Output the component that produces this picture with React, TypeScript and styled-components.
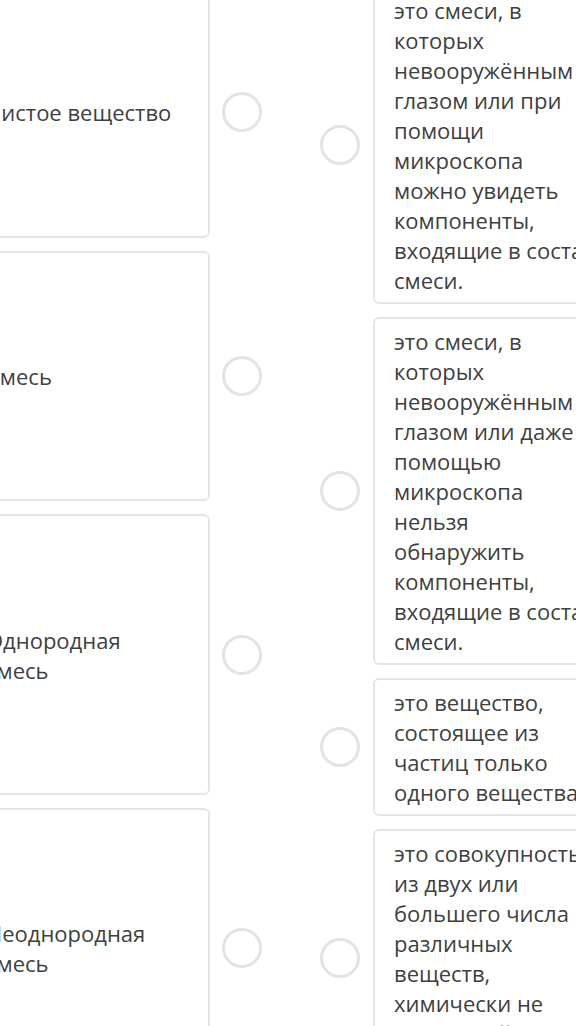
import React from "react";
import styled, { createGlobalStyle } from "styled-components";

const Global = createGlobalStyle`
  html, body { margin: 0; padding: 0; background: #ffffff; overflow: hidden; }
  body { font-family: "Open Sans", "Noto Sans", sans-serif; }
`;

const Board = styled.div`
  display: flex;
  align-items: flex-start;
  margin-left: -33px;
  margin-top: -14px;
  width: 720px;
`;

const Column = styled.div<{ $gap: number }>`
  display: flex;
  flex-direction: column;
  gap: ${(p) => p.$gap}px;
`;

const Item = styled.div<{ $gap: number }>`
  display: flex;
  align-items: center;
  gap: ${(p) => p.$gap}px;
`;

const LeftCard = styled.div<{ $h: number }>`
  box-sizing: border-box;
  width: 243px;
  height: ${(p) => p.$h}px;
  border: 2px solid #e4e5e6;
  border-radius: 6px;
  background: #fff;
  display: flex;
  flex-direction: column;
  justify-content: center;
  padding: 0 19px 0 17px;
  font-size: 22px;
  line-height: 30px;
  color: #3e3f40;
`;

const RightCard = styled.div`
  box-sizing: border-box;
  width: 280px;
  border: 2px solid #e4e5e6;
  border-radius: 6px;
  background: #fff;
  padding: 7px 19px;
  font-size: 22px;
  line-height: 30px;
  color: #3e3f40;
`;

const Line = styled.span`
  display: block;
  white-space: nowrap;
`;

const Dot = styled.div`
  box-sizing: border-box;
  width: 40px;
  height: 40px;
  border-radius: 50%;
  border: 3px solid #e1e4e6;
  flex: none;
`;

const Spacer = styled.div`
  width: 58px;
  flex: none;
`;

const lefts = [
  { lines: ["Чистое вещество"], h: 252 },
  { lines: ["Смесь"], h: 250 },
  { lines: ["Однородная", "смесь"], h: 281 },
  { lines: ["Неоднородная", "смесь"], h: 280 },
];

const rights = [
  [
    "это смеси, в",
    "которых",
    "невооружённым",
    "глазом или при",
    "помощи",
    "микроскопа",
    "можно увидеть",
    "компоненты,",
    "входящие в состав",
    "смеси.",
  ],
  [
    "это смеси, в",
    "которых",
    "невооружённым",
    "глазом или даже с",
    "помощью",
    "микроскопа",
    "нельзя",
    "обнаружить",
    "компоненты,",
    "входящие в состав",
    "смеси.",
  ],
  ["это вещество,", "состоящее из", "частиц только", "одного вещества."],
  [
    "это совокупность",
    "из двух или",
    "большего числа",
    "различных",
    "веществ,",
    "химически не",
    "взаимодействующих",
    "между собой.",
  ],
];

export default function App() {
  return (
    <>
      <Global />
      <Board>
        <Column $gap={13}>
          {lefts.map((l, i) => (
            <Item key={i} $gap={12}>
              <LeftCard $h={l.h}>
                {l.lines.map((t) => (
                  <Line key={t}>{t}</Line>
                ))}
              </LeftCard>
              <Dot />
            </Item>
          ))}
        </Column>
        <Spacer />
        <Column $gap={13}>
          {rights.map((r, i) => (
            <Item key={i} $gap={13}>
              <Dot />
              <RightCard>
                {r.map((t, j) => (
                  <Line key={j}>{t}</Line>
                ))}
              </RightCard>
            </Item>
          ))}
        </Column>
      </Board>
    </>
  );
}
